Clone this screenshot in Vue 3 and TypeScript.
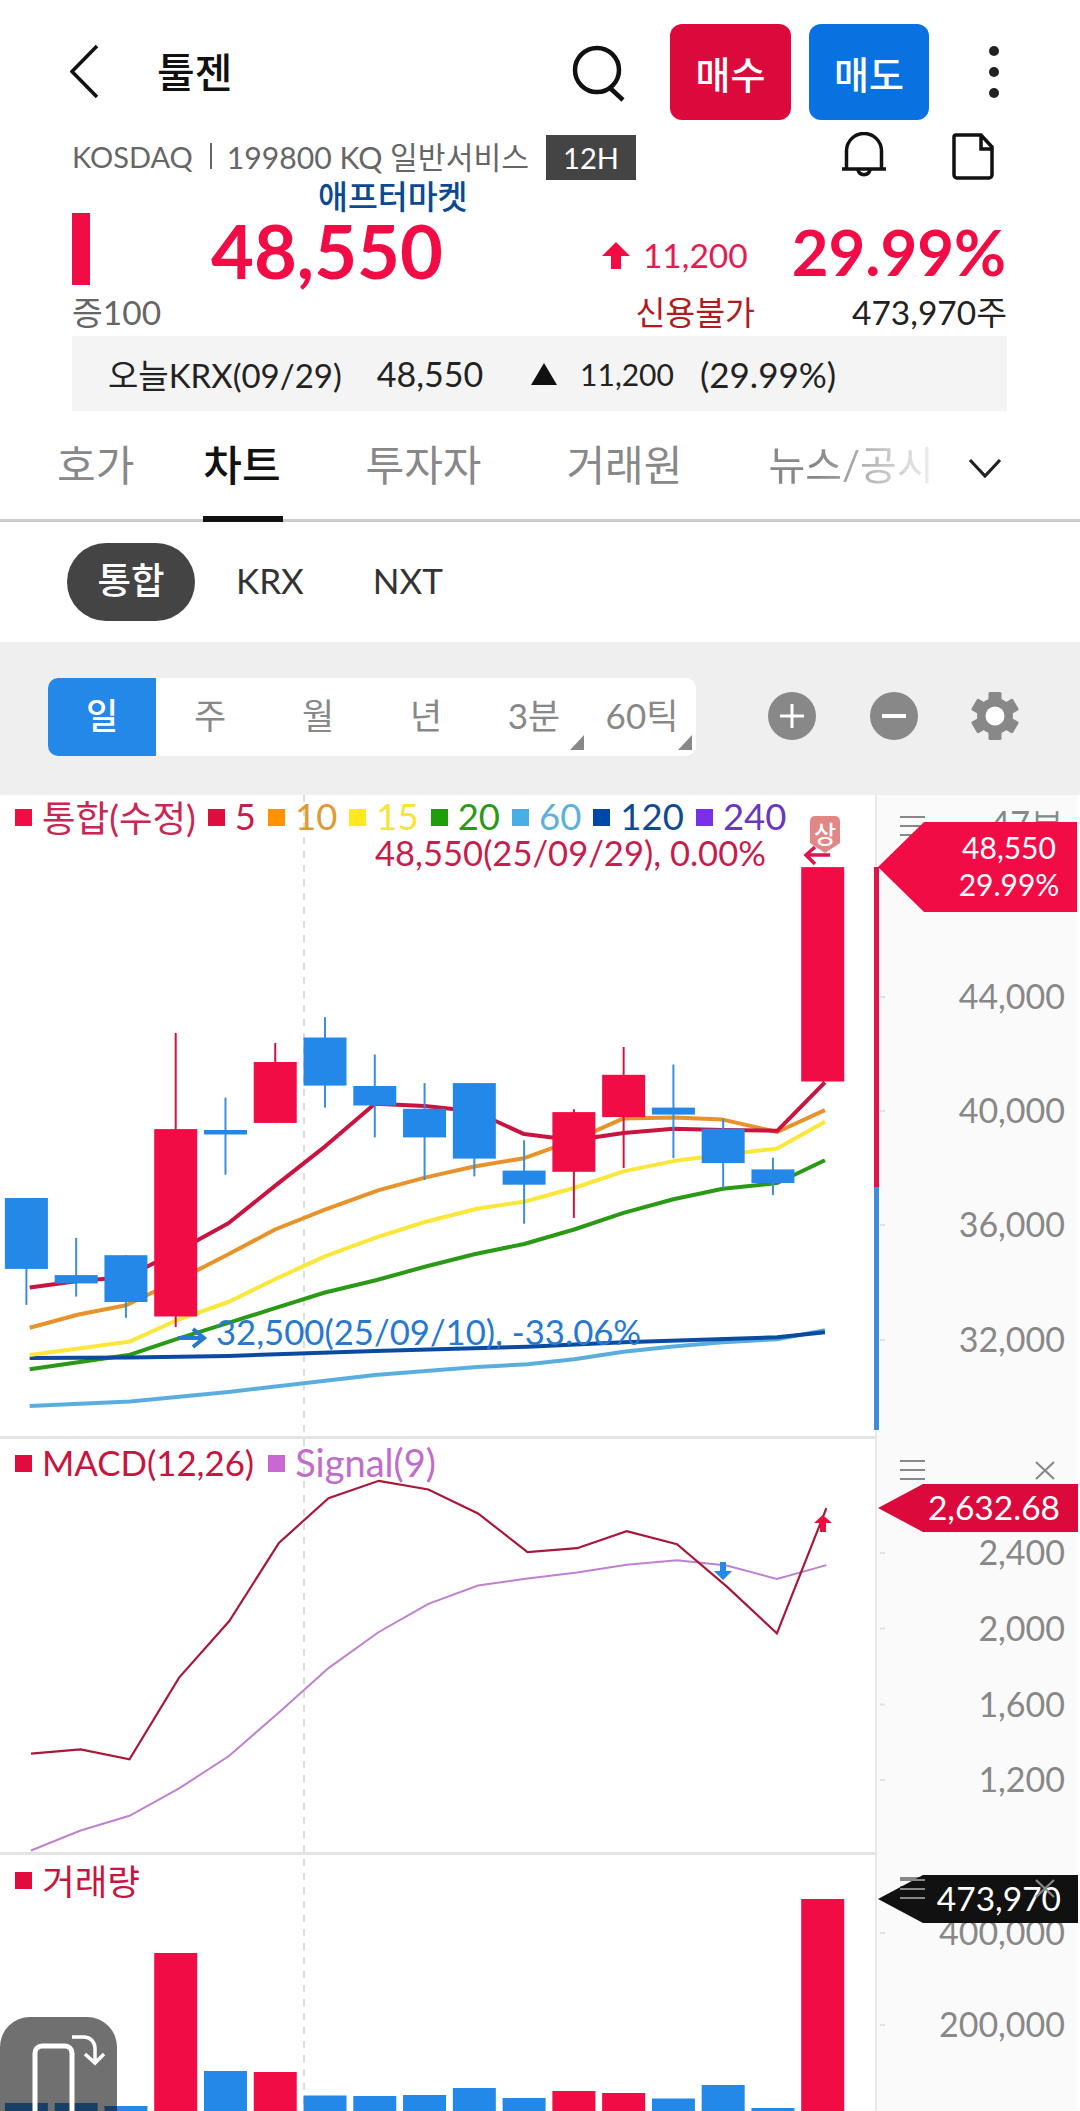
<script setup lang="ts">
const RED = '#f20c46'
const BLUE = '#2488e8'
const x1 = (z: number) => +(z / 1.782).toFixed(1)
const y1 = (z: number) => +(790 + z / 2.412).toFixed(1)
const x2 = (z: number) => +(z / 1.452).toFixed(1)
const y2 = (z: number) => +(1430 + z / 2.302).toFixed(1)
const toPts = (a: number[][], fx: (n: number) => number, fy: (n: number) => number) =>
  a.map(([x, y]) => `${fx(x)},${fy(y)}`).join(' ')

const legend = [
  { label: '통합(수정)', sq: RED, fg: '#cb2554' },
  { label: '5', sq: '#e00c40', fg: '#c81c4c' },
  { label: '10', sq: '#ff9200', fg: '#e09a35' },
  { label: '15', sq: '#ffe81e', fg: '#f7e33a' },
  { label: '20', sq: '#1e9e0a', fg: '#2a9a16' },
  { label: '60', sq: '#4aaee6', fg: '#5cb0dc' },
  { label: '120', sq: '#0048a8', fg: '#0f4a98' },
  { label: '240', sq: '#7a30e8', fg: '#6a36c0' }
]

const ma = [
  { c: '#5aaede', w: 4, p: [[53,1486],[232,1475],[407,1452],[668,1411],[850,1392],[940,1385],[1023,1373],[1111,1355],[1200,1342],[1288,1332],[1385,1325],[1470,1303]] },
  { c: '#2a9a16', w: 4, p: [[53,1397],[232,1362],[313,1325],[407,1285],[490,1250],[579,1212],[668,1183],[757,1150],[845,1120],[934,1095],[1023,1060],[1111,1020],[1200,987],[1288,962],[1385,948],[1470,893]] },
  { c: '#0a4aa0', w: 4, p: [[53,1370],[232,1369],[407,1365],[668,1353],[940,1343],[1111,1332],[1385,1320],[1470,1308]] },
  { c: '#fbe63a', w: 4, p: [[53,1363],[140,1347],[232,1330],[313,1280],[407,1235],[490,1180],[579,1125],[668,1080],[757,1042],[850,1010],[934,993],[1023,960],[1111,920],[1200,895],[1288,880],[1385,865],[1470,800]] },
  { c: '#e8922a', w: 4, p: [[53,1297],[140,1265],[225,1243],[313,1185],[407,1120],[490,1060],[579,1012],[675,965],[757,935],[845,908],[934,888],[1023,845],[1111,792],[1200,790],[1288,795],[1385,825],[1470,772]] },
  { c: '#c8143e', w: 4, p: [[53,1200],[136,1185],[225,1175],[313,1115],[407,1045],[490,955],[579,860],[668,757],[757,762],[845,775],[934,830],[1023,845],[1111,827],[1200,817],[1288,820],[1385,822],[1470,705]] }
].map(l => ({ ...l, pts: toPts(l.p, x1, y1) }))

// [up?, bodyTop, bodyBottom, wickTop, wickBottom]
const rawCandles: [number, number, number, number, number][] = [
  [0,984,1155,984,1242],[0,1170,1190,1080,1222],[0,1122,1235,1122,1273],[1,818,1270,586,1295],
  [0,820,831,742,928],[1,656,803,610,803],[0,597,713,548,766],[0,714,761,638,838],
  [0,769,838,707,941],[0,707,889,707,932],[0,918,952,845,1046],[1,777,921,770,1032],
  [1,687,789,620,912],[0,766,783,662,888],[0,817,900,793,960],[0,915,948,887,977],[1,186,703,186,703]
]
const center = (i: number) => 26.4 + i * 49.77
const candles = rawCandles.map(([u, t, b, wt, wb], i) => ({
  cx: center(i), x: center(i) - 21.5, y: y1(t), h: y1(b) - y1(t),
  wt: y1(wt), wb: y1(wb), fill: u ? RED : BLUE, wick: u ? '#d0143f' : '#3a8fd8'
}))

const macd = toPts([[45,745],[117,735],[188,758],[260,570],[333,440],[405,260],[477,157],[550,117],[622,137],[694,192],[766,281],[838,272],[910,233],[983,263],[1055,360],[1128,468],[1200,180]], x2, y2)
const signal = toPts([[45,968],[117,922],[188,888],[260,825],[333,750],[405,650],[477,548],[550,465],[622,400],[694,358],[766,342],[838,328],[910,310],[983,300],[1055,312],[1128,343],[1200,311]], x2, y2)

const barTops: [number, number][] = [[1,2103],[0,2103],[0,2106],[1,1953],[0,2071],[1,2072],[0,2095.5],[0,2096],[0,2095],[0,2088],[0,2098],[1,2091],[1,2093],[0,2098.5],[0,2085],[0,2108],[1,1899]]
const bars = barTops.map(([u, top], i) => ({
  x: center(i) - 21.5, y: top, h: 2111 - top, fill: i < 2 ? BLUE : u ? RED : BLUE
}))

const axisLabels = [
  { t: '44,000', y: 997 }, { t: '40,000', y: 1111 }, { t: '36,000', y: 1225 }, { t: '32,000', y: 1340 },
  { t: '2,400', y: 1553 }, { t: '2,000', y: 1628.5 }, { t: '1,600', y: 1704.5 }, { t: '1,200', y: 1780 },
  { t: '400,000', y: 1933 }, { t: '200,000', y: 2025 }
]
const menus = [816, 1460, 1877]
const periods = ['일', '주', '월', '년', '3분', '60틱']
</script>

<template>
  <div class="page">
    <header class="top">
      <svg class="back" width="30" height="56" viewBox="0 0 30 56"><path d="M27 2 L2 27.5 L27 53" /></svg>
      <h1 class="title">툴젠</h1>
      <svg class="search" width="56" height="60" viewBox="0 0 56 60"><circle cx="27" cy="27" r="22" /><path d="M40 45 L53 57" /></svg>
      <button class="trade buy">매수</button>
      <button class="trade sell">매도</button>
      <div class="dots"><i></i><i></i><i></i></div>
    </header>

    <div class="info">
      <span class="market">KOSDAQ<b class="sep"></b><span class="code">199800 KQ 일반서비스</span></span>
      <span class="tag">12H</span>
      <svg class="bell" width="46" height="48" viewBox="0 0 46 48"><path d="M5.5 37 V19 a17.5 17.5 0 0 1 35 0 V37 M1 37 H45 M17 38 a6.2 6.2 0 0 0 12 0" /></svg>
      <svg class="file" width="42" height="47" viewBox="0 0 42 47"><path d="M4 2 H29 L40 14 V42 a3 3 0 0 1 -3 3 H5 a3 3 0 0 1 -3 -3 V4 a2 2 0 0 1 2 -2 Z M29 2 V16 H40" /></svg>
    </div>

    <div class="after">애프터마켓</div>
    <div class="quote">
      <span class="limit-bar"></span>
      <span class="price">48,550</span>
      <svg class="up" width="30" height="27" viewBox="0 0 30 27"><path d="M15 0 L29 14 H20 V27 H10 V14 H1 Z" /></svg>
      <span class="diff">11,200</span>
      <span class="rate">29.99%</span>
    </div>
    <div class="sub">
      <span class="margin">증100</span>
      <span class="credit">신용불가</span>
      <span class="volume">473,970주</span>
    </div>
    <div class="krx">
      <span class="krx-date">오늘KRX(09/29)</span>
      <span class="krx-price">48,550</span>
      <span class="krx-tri"></span>
      <span class="krx-diff">11,200</span>
      <span class="krx-rate">(29.99%)</span>
    </div>

    <nav class="tabs">
      <span class="tab">호가</span>
      <span class="tab tab-on">차트</span>
      <span class="tab tab-3">투자자</span>
      <span class="tab tab-4">거래원</span>
      <span class="tab tab-5">뉴스/공시</span>
      <svg class="more" width="34" height="20" viewBox="0 0 34 20"><path d="M2 2 L17 18 L32 2" /></svg>
    </nav>

    <div class="venues">
      <span class="venue venue-on">통합</span>
      <span class="venue">KRX</span>
      <span class="venue venue-n">NXT</span>
    </div>

    <div class="toolbar">
      <div class="segments">
        <span v-for="(p, i) in periods" :key="p" class="seg" :class="{ 'seg-on': i === 0, 'seg-tri': i > 3 }">{{ p }}</span>
      </div>
      <svg class="tool" width="48" height="48" viewBox="0 0 48 48"><circle cx="24" cy="24" r="24" fill="#888" /><path d="M12 24 H36 M24 12 V36" stroke="#fff" stroke-width="3" /></svg>
      <svg class="tool tool-minus" width="48" height="48" viewBox="0 0 48 48"><circle cx="24" cy="24" r="24" fill="#888" /><path d="M12 24 H36" stroke="#fff" stroke-width="4" /></svg>
      <svg class="tool tool-gear" width="48" height="48" viewBox="0 0 48 48">
        <g fill="#888">
          <circle cx="24" cy="24" r="18" />
          <rect x="17.5" y="0" width="13" height="48" rx="1.5" />
          <rect x="17.5" y="0" width="13" height="48" rx="1.5" transform="rotate(60 24 24)" />
          <rect x="17.5" y="0" width="13" height="48" rx="1.5" transform="rotate(120 24 24)" />
        </g>
        <circle cx="24" cy="24" r="9.5" fill="#fff" />
      </svg>
    </div>

    <section class="chart">
      <div class="plot">
        <div class="pane pane-price">
          <div class="legend">
            <span v-for="l in legend" :key="l.label" class="leg" :style="{ color: l.fg }">
              <i :style="{ background: l.sq }"></i>{{ l.label }}
            </span>
          </div>
          <div class="high-note">48,550(25/09/29), 0.00%</div>
        </div>
        <div class="pane pane-macd">
          <div class="legend">
            <span class="leg leg-macd"><i class="sq-macd"></i>MACD(12,26)</span>
            <span class="leg leg-signal"><i class="sq-signal"></i>Signal(9)</span>
          </div>
        </div>
        <div class="pane pane-vol">
          <div class="legend">
            <span class="leg leg-macd"><i class="sq-red"></i>거래량</span>
          </div>
        </div>
      </div>
      <div class="axis"></div>

      <svg class="canvas" width="1080" height="1316" viewBox="0 795 1080 1316">
        <line x1="304" y1="795" x2="304" y2="2111" stroke="#ddd" stroke-width="2" stroke-dasharray="7 7" />
        <polyline v-for="l in ma" :key="l.c" :points="l.pts" fill="none" :stroke="l.c" :stroke-width="l.w" stroke-linejoin="round" />
        <g v-for="c in candles" :key="c.cx">
          <line :x1="c.cx" :x2="c.cx" :y1="c.wt" :y2="c.wb" :stroke="c.wick" stroke-width="2" />
          <rect :x="c.x" :y="c.y" width="43" :height="c.h" :fill="c.fill" />
        </g>

        <path d="M178 1338 H204 M193 1329 L204 1338 L193 1347" fill="none" stroke="#2678d0" stroke-width="4" />
        <text x="216" y="1345" class="low-note">32,500(25/09/10), -33.06%</text>

        <path d="M815 816 H835 a5 5 0 0 1 5 5 V843 L825 853 L810 843 V821 a5 5 0 0 1 5 -5 Z" fill="#e28686" />
        <text x="825" y="843" class="limit-mark">상</text>
        <path d="M830 855 H807 M815 847 L806 855 L815 864" fill="none" stroke="#e0144c" stroke-width="3.5" />

        <polyline :points="signal" fill="none" stroke="#c080d0" stroke-width="2" />
        <polyline :points="macd" fill="none" stroke="#a81838" stroke-width="2.2" />
        <path d="M822.7 1515 L832 1523 H826 V1532 H820 V1523 H814 Z" fill="#e8103e" />
        <path d="M720 1562 H726 V1571 H732 L723 1580 L714 1571 H720 Z" :fill="BLUE" />

        <rect v-for="b in bars" :key="b.x" :x="b.x" :y="b.y" width="43" :height="b.h" :fill="b.fill" />

        <rect x="874" y="867" width="5" height="320" fill="#e0144c" />
        <rect x="874" y="1187" width="5" height="243" fill="#3a8fd8" />

        <g stroke="#e2e2e2" stroke-width="2">
          <line v-for="a in axisLabels" :key="a.t" x1="880" x2="885" :y1="a.y" :y2="a.y" />
        </g>
        <text x="1064" y="836" class="axis-label">47분</text>
        <text v-for="a in axisLabels" :key="a.t" x="1065" :y="a.y + 12" class="axis-label">{{ a.t }}</text>

        <g v-for="m in menus" :key="m" stroke="#888" stroke-width="2.2">
          <path :d="`M900 ${m + 1} H925 M900 ${m + 10} H925 M900 ${m + 19} H925`" />
        </g>
        <path d="M1036 1462 L1054 1479 M1054 1462 L1036 1479" stroke="#888" stroke-width="2.2" />

        <polygon points="878,867 924,822 1077,822 1077,912 924,912" :fill="RED" />
        <text x="1009" y="859" class="flag-text">48,550</text>
        <text x="1009" y="896" class="flag-text">29.99%</text>

        <polygon points="878,1508 923,1484 1078,1484 1078,1532 923,1532" fill="#dc0a3c" />
        <text x="1060" y="1520" class="flag-text flag-end">2,632.68</text>

        <polygon points="878,1899 923,1875 1078,1875 1078,1923 923,1923" fill="#111" />
        <text x="1061" y="1911" class="flag-text flag-end">473,970</text>
        <g stroke="#888" stroke-width="2.2">
          <path d="M900 1880 H925 M900 1889 H925 M900 1898 H925" />
          <path d="M1036 1880 L1054 1897 M1054 1880 L1036 1897" />
        </g>
      </svg>

      <div class="rotate">
        <svg width="117" height="94" viewBox="0 0 117 94">
          <rect x="35" y="29" width="37" height="80" rx="7" fill="none" stroke="#fff" stroke-width="5" />
          <path d="M72 20 H84 a11 11 0 0 1 11 11 V45 M85 37 L95 46 L104 37" fill="none" stroke="#fff" stroke-width="3.5" />
        </svg>
      </div>
    </section>
  </div>
</template>

<style>
html, body { margin: 0; background: #fff; }
</style>

<style scoped>
.page {
  width: 1080px;
  height: 2111px;
  overflow: hidden;
  background: #fff;
  font-family: Lato, "Noto Sans CJK KR", sans-serif;
  color: #222;
}
.top {
  display: flex;
  align-items: center;
  height: 96px;
  margin-top: 0;
  padding-top: 24px;
}
.back { margin-left: 70px; flex: none; }
.back path { fill: none; stroke: #111; stroke-width: 3.6; }
.title {
  margin: 0 0 0 57px;
  font-size: 41px;
  font-weight: 500;
  color: #111;
  line-height: 1;
}
.search { margin-left: auto; margin-top: 2px; }
.search circle, .search path { fill: none; stroke: #111; stroke-width: 4.5; }
.trade {
  width: 121px;
  height: 96px;
  border: 0;
  padding: 0;
  margin-left: 44px;
  border-radius: 12px;
  color: #fff;
  font: 500 38px Lato, "Noto Sans CJK KR", sans-serif;
}
.buy { background: #dc0a3c; }
.sell { background: #0a72e0; margin-left: 18px; width: 120px; }
.dots {
  display: flex;
  flex-direction: column;
  gap: 11px;
  margin: 0 81px 0 60px;
}
.dots i { width: 10px; height: 10px; border-radius: 50%; background: #222; }
.info {
  display: flex;
  align-items: center;
  height: 48px;
  margin-top: 12px;
  padding: 0 86px 0 72px;
}
.market { font-size: 29px; color: #666; display: flex; align-items: center; white-space: nowrap; }
.code { font-size: 30.2px; }
.sep { width: 2px; height: 26px; background: #666; margin: 0 15px 0 17px; }
.tag {
  margin-left: 17px;
  width: 90px;
  height: 45px;
  margin-top: 3px;
  background: #444;
  color: #fff;
  font-size: 29px;
  text-align: center;
  line-height: 45px;
}
.bell { margin-left: auto; flex: none; }
.bell path, .file path { fill: none; stroke: #111; stroke-width: 3.5; }
.file { margin-left: 65px; flex: none; }
.after {
  height: 33px;
  padding-left: 318px;
  font-size: 32.5px;
  font-weight: 500;
  line-height: 33px;
  color: #0b4a93;
}
.quote {
  display: flex;
  align-items: center;
  height: 72px;
  padding-left: 72px;
}
.limit-bar { width: 18px; height: 72px; background: #f20c46; }
.price {
  margin-left: 121px;
  font-size: 74px;
  font-weight: 700;
  color: #f20c46;
  line-height: 1;
  margin-top: 4px;
}
.up { margin-left: 158px; fill: #f20c46; margin-top: 12px; }
.diff { margin-left: 12px; font-size: 33.5px; color: #e51c50; margin-top: 12px; }
.rate { margin-left: 44px; font-size: 63.5px; font-weight: 700; color: #f20c46; line-height: 1; margin-top: 6px; }
.sub {
  display: flex;
  align-items: center;
  height: 51px;
  padding-left: 72px;
  font-size: 33.5px;
}
.margin { color: #666; }
.credit { margin-left: auto; color: #b01c1c; font-size: 32.5px; }
.volume { margin-left: 97px; margin-right: 73px; color: #222; font-size: 33.5px; }
.krx {
  display: flex;
  align-items: center;
  height: 75px;
  margin: 0 73px 0 72px;
  padding-left: 36px;
  background: #f4f4f4;
  font-size: 33px;
  color: #222;
  white-space: nowrap;
}
.krx-price { margin-left: 35px; font-size: 34px; }
.krx-tri {
  margin-left: 48px;
  width: 0;
  height: 0;
  border-left: 13px solid transparent;
  border-right: 13px solid transparent;
  border-bottom: 22px solid #111;
}
.krx-diff { margin-left: 23px; font-size: 30px; }
.krx-rate { margin-left: 26px; font-size: 35px; }
.tabs {
  display: flex;
  align-items: center;
  height: 108px;
  border-bottom: 3px solid #ccc;
  padding-left: 57px;
  font-size: 42px;
  color: #888;
}
.tab { position: relative; white-space: nowrap; line-height: 50px; }
.tab-on { margin-left: 69px; color: #111; font-weight: 500; }
.tab-on::after {
  content: "";
  position: absolute;
  left: 0;
  right: -2px;
  bottom: -32px;
  height: 6px;
  background: #111;
}
.tab-3 { margin-left: 85px; }
.tab-4 { margin-left: 85px; }
.tab-5 {
  margin-left: 86px;
  width: 165px;
  overflow: hidden;
  flex: none;
  font-size: 40px;
  -webkit-mask-image: linear-gradient(to right, #000 30%, rgba(0,0,0,.12) 100%);
  mask-image: linear-gradient(to right, #000 30%, rgba(0,0,0,.12) 100%);
}
.more { margin-left: 35px; margin-top: 6px; flex: none; }
.more path { fill: none; stroke: #222; stroke-width: 3.2; }
.venues {
  display: flex;
  align-items: center;
  height: 120px;
  padding-left: 67px;
  font-size: 35px;
  color: #333;
}
.venue { margin-right: 41px; margin-top: -4px; }
.venue-on {
  width: 128px;
  height: 78px;
  border-radius: 39px;
  background: #444;
  color: #fff;
  text-align: center;
  line-height: 74px;
  font-size: 36.5px;
  font-weight: 500;
  margin-top: 0;
}
.venue-n { margin-left: 28px; }
.toolbar {
  display: flex;
  align-items: center;
  height: 153px;
  background: #efefef;
  padding-left: 48px;
}
.segments {
  display: flex;
  width: 648px;
  height: 78px;
  margin-top: -3px;
  background: #fff;
  border-radius: 10px;
  overflow: hidden;
}
.seg {
  position: relative;
  width: 108px;
  text-align: center;
  line-height: 74px;
  font-size: 35px;
  color: #888;
}
.seg-on { background: #2488e8; color: #fff; font-weight: 500; }
.seg-tri::after {
  content: "";
  position: absolute;
  right: 4px;
  bottom: 6px;
  width: 0;
  height: 0;
  border-left: 14px solid transparent;
  border-bottom: 15px solid #888;
}
.tool { flex: none; margin-top: -5px; margin-left: 72px; }
.tool-minus { margin-left: 54px; }
.tool-gear { margin-left: 53px; }
.chart {
  position: relative;
  display: flex;
  height: 1316px;
}
.plot { width: 875px; flex: none; background: #fff; }
.axis { flex: 1; background: #fafafa; border-left: 2px solid #e8e8e8; margin-right: 3px; }
.pane { box-sizing: border-box; overflow: hidden; border-bottom: 3px solid #e4e4e4; }
.pane-price { height: 644px; }
.pane-macd { height: 416px; }
.pane-vol { height: 256px; border-bottom: 0; }
.legend {
  position: relative;
  z-index: 1;
  display: flex;
  gap: 12px;
  padding: 0 0 0 15px;
  height: 40px;
  margin-top: 1px;
  align-items: center;
  font-size: 36.5px;
  white-space: nowrap;
}
.leg { display: flex; align-items: center; }
.leg i { width: 17px; height: 17px; margin-right: 10px; flex: none; margin-top: 3px; }
.leg-macd { color: #c8143e; }
.leg-signal { color: #c06ccc; font-size: 38px; }
.sq-macd, .sq-red { background: #e00c40; }
.sq-signal { background: #c868d0; }
.pane-macd .legend { margin-top: 3px; gap: 14px; font-size: 34.8px; }
.pane-vol .legend { margin-top: 4px; font-size: 35.5px; }
.high-note {
  position: relative;
  z-index: 1;
  margin: -1px 0 0 375px;
  font-size: 34.6px;
  line-height: 36px;
  color: #c81c4c;
  white-space: nowrap;
}
.canvas { position: absolute; left: 0; top: 0; pointer-events: none; }
.low-note { font: 34.7px Lato, sans-serif; fill: #2678d0; }
.limit-mark { font: 500 24px "Noto Sans CJK KR", sans-serif; fill: #fff; text-anchor: middle; }
.axis-label { font: 34px Lato, sans-serif; fill: #888; text-anchor: end; }
.flag-text { font: 30px Lato, sans-serif; fill: #fff; text-anchor: middle; }
.flag-end { font-size: 33.5px; text-anchor: end; }
.rotate {
  position: absolute;
  left: 0;
  bottom: 0;
  width: 117px;
  height: 94px;
  overflow: hidden;
  border-radius: 30px 30px 0 0;
  background: rgba(17, 17, 17, 0.6);
}
.rotate svg { display: block; }
</style>
